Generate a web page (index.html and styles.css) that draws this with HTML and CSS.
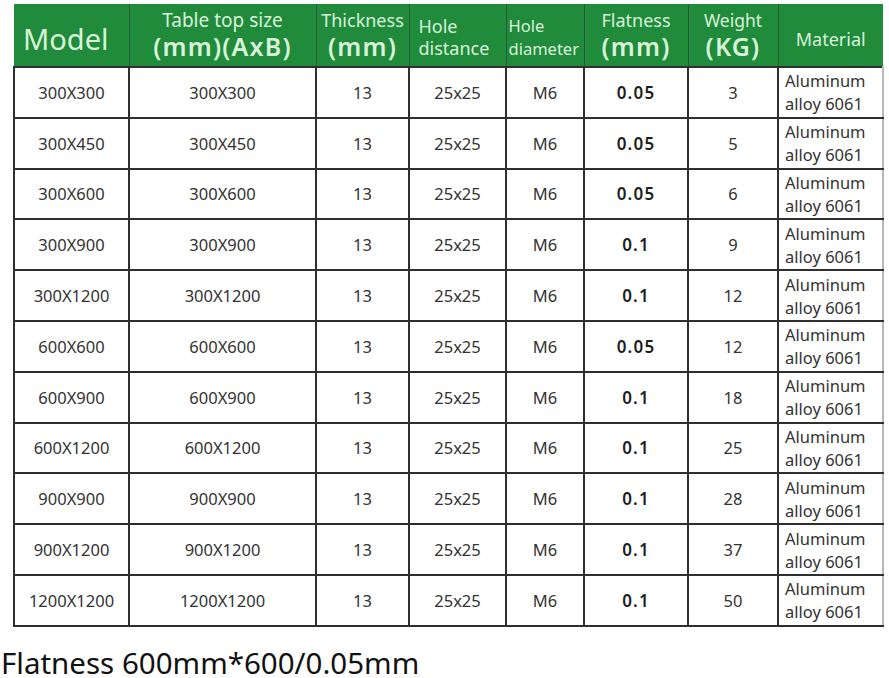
FILE: index.html
```html
<!DOCTYPE html>
<html lang="en">
<head>
<meta charset="utf-8">
<title>Table specs</title>
<link rel="stylesheet" href="styles.css">
</head>
<body>
<table class="spec">
  <colgroup>
    <col class="c1"><col class="c2"><col class="c3"><col class="c4"><col class="c5"><col class="c6"><col class="c7"><col class="c8">
  </colgroup>
  <thead>
    <tr>
      <th class="h-model">Model</th>
      <th><span class="sm sm-tt">Table top size</span><span class="bg">(mm)(AxB)</span></th>
      <th><span class="sm">Thickness</span><span class="bg">(mm)</span></th>
      <th class="h-left"><span class="sm">Hole</span><span class="sm">distance</span></th>
      <th class="h-left h-dia"><span class="sm">Hole</span><span class="sm">diameter</span></th>
      <th><span class="sm">Flatness</span><span class="bg">(mm)</span></th>
      <th><span class="sm sm-w">Weight</span><span class="bg">(KG)</span></th>
      <th class="h-mat">Material</th>
    </tr>
  </thead>
  <tbody>
    <tr><td>300X300</td><td>300X300</td><td>13</td><td>25x25</td><td>M6</td><td class="flat">0.05</td><td>3</td><td class="mat">Aluminum<br>alloy 6061</td></tr>
    <tr><td>300X450</td><td>300X450</td><td>13</td><td>25x25</td><td>M6</td><td class="flat">0.05</td><td>5</td><td class="mat">Aluminum<br>alloy 6061</td></tr>
    <tr><td>300X600</td><td>300X600</td><td>13</td><td>25x25</td><td>M6</td><td class="flat">0.05</td><td>6</td><td class="mat">Aluminum<br>alloy 6061</td></tr>
    <tr><td>300X900</td><td>300X900</td><td>13</td><td>25x25</td><td>M6</td><td class="flat">0.1</td><td>9</td><td class="mat">Aluminum<br>alloy 6061</td></tr>
    <tr><td>300X1200</td><td>300X1200</td><td>13</td><td>25x25</td><td>M6</td><td class="flat">0.1</td><td>12</td><td class="mat">Aluminum<br>alloy 6061</td></tr>
    <tr><td>600X600</td><td>600X600</td><td>13</td><td>25x25</td><td>M6</td><td class="flat">0.05</td><td>12</td><td class="mat">Aluminum<br>alloy 6061</td></tr>
    <tr><td>600X900</td><td>600X900</td><td>13</td><td>25x25</td><td>M6</td><td class="flat">0.1</td><td>18</td><td class="mat">Aluminum<br>alloy 6061</td></tr>
    <tr><td>600X1200</td><td>600X1200</td><td>13</td><td>25x25</td><td>M6</td><td class="flat">0.1</td><td>25</td><td class="mat">Aluminum<br>alloy 6061</td></tr>
    <tr><td>900X900</td><td>900X900</td><td>13</td><td>25x25</td><td>M6</td><td class="flat">0.1</td><td>28</td><td class="mat">Aluminum<br>alloy 6061</td></tr>
    <tr><td>900X1200</td><td>900X1200</td><td>13</td><td>25x25</td><td>M6</td><td class="flat">0.1</td><td>37</td><td class="mat">Aluminum<br>alloy 6061</td></tr>
    <tr><td>1200X1200</td><td>1200X1200</td><td>13</td><td>25x25</td><td>M6</td><td class="flat">0.1</td><td>50</td><td class="mat">Aluminum<br>alloy 6061</td></tr>
  </tbody>
</table>
<p class="note">Flatness 600mm*600/0.05mm</p>
</body>
</html>
```

FILE: styles.css
```css
html, body {
  margin: 0;
  padding: 0;
  background: #ffffff;
}
body {
  font-family: "Noto Sans", "Open Sans", sans-serif;
  color: #2b2b2b;
}
.spec {
  margin: 4px 0 0 13px;
  border-collapse: collapse;
  table-layout: fixed;
  width: 869px;
}
.c1 { width: 115px; }
.c2 { width: 187px; }
.c3 { width: 93px; }
.c4 { width: 97px; }
.c5 { width: 78px; }
.c6 { width: 104px; }
.c7 { width: 90px; }
.c8 { width: 105px; }

.spec thead tr { height: 63px; }
.spec th {
  background: #1f8b3b;
  color: #d9f3da;
  font-weight: 400;
  padding: 0;
  border-left: 1.5px solid #2a5a33;
  vertical-align: middle;
  text-align: center;
  line-height: 1;
}
.spec th:first-child { border-left: none; }
.spec th .sm {
  display: block;
  font-size: 18px;
  line-height: 22px;
  white-space: nowrap;
}
.spec th .sm-tt { font-size: 19px; }
.spec th .sm-w { font-size: 17.5px; }
.spec th .bg {
  display: block;
  font-size: 25px;
  font-weight: 600;
  line-height: 30px;
  letter-spacing: 1.2px;
  white-space: nowrap;
}
.spec th.h-model {
  font-size: 29px;
  text-align: left;
  padding-left: 9px;
  padding-top: 6px;
}
.spec th.h-left {
  text-align: left;
  padding-left: 9px;
  padding-top: 4px;
}
.spec th.h-dia { padding-left: 2px; }
.spec th.h-dia .sm { font-size: 16.5px; line-height: 23px; }
.spec th.h-left .sm:first-child { line-height: 22px; }
.spec th.h-mat {
  font-size: 18px;
  padding-top: 8px;
}

.spec tbody tr { height: 50.8px; }
.spec td {
  border: 2px solid #2f2f2f;
  text-align: center;
  vertical-align: middle;
  font-size: 16.5px;
  padding: 0;
  color: #333333;
}
.spec td:last-child { border-right: 2px solid #b9b9b9; }
.spec td.flat {
  font-weight: 600;
  font-size: 17px;
  color: #1f1f1f;
  letter-spacing: 1.2px;
}
.spec td.mat {
  text-align: left;
  padding-left: 6px;
  line-height: 23px;
  font-size: 16.5px;
}
.note {
  margin: 20px 0 0 1px;
  font-size: 29.5px;
  line-height: 32px;
  color: #111111;
}
```
